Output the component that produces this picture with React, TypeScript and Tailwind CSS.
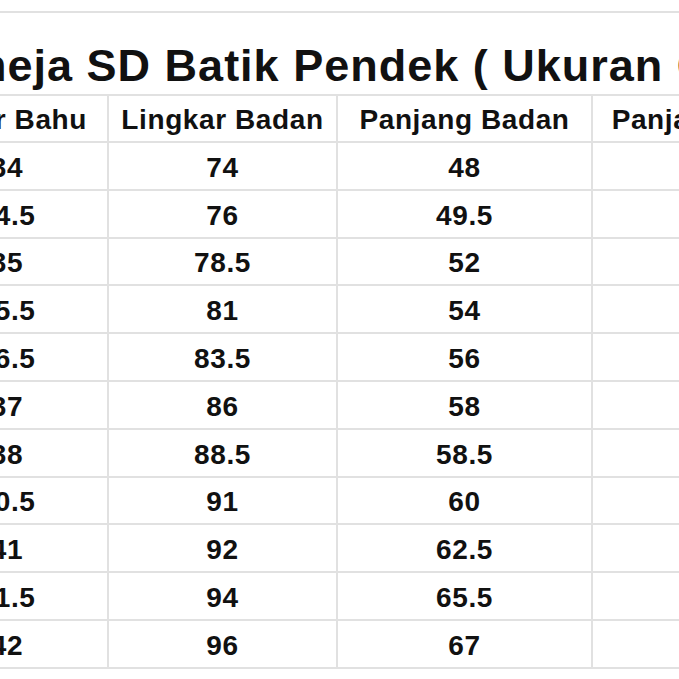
const header = ['Lebar Bahu', 'Lingkar Badan', 'Panjang Badan', 'Panjang Lengan'];

const rows = [
  ['34', '74', '48', ''],
  ['34.5', '76', '49.5', ''],
  ['35', '78.5', '52', ''],
  ['35.5', '81', '54', ''],
  ['36.5', '83.5', '56', ''],
  ['37', '86', '58', ''],
  ['38', '88.5', '58.5', ''],
  ['40.5', '91', '60', ''],
  ['41', '92', '62.5', ''],
  ['41.5', '94', '65.5', ''],
  ['42', '96', '67', ''],
];

const widths = ['w-[202px]', 'w-[229px]', 'w-[255px]', 'w-[264px]'];

const Cell = ({ text, i, tall }: { text: string; i: number; tall?: boolean }) => (
  <div
    className={`${widths[i]} shrink-0 flex items-end justify-center border-r-2 border-b-2 border-[#e1e1e1] pb-[7px] ${
      tall ? 'h-[47px]' : 'h-[47.8px]'
    }`}
  >
    <span className="text-[28px] leading-[28px] font-bold tracking-[0.6px] text-[#111] whitespace-nowrap">{text}</span>
  </div>
);

export default function App() {
  return (
    <div className="w-[679px] h-[679px] overflow-hidden bg-white" style={{ fontFamily: '"Liberation Sans", Arial, sans-serif' }}>
      <div className="ml-[-93px] w-[1000px] pt-[11px]">
        <div className="h-[85px] border-t-2 border-b-2 border-[#e1e1e1] flex items-end pb-[6px]">
          <h1 className="text-[45px] leading-[45px] font-bold tracking-[1px] text-[#111] whitespace-nowrap">
            Kemeja SD Batik Pendek ( Ukuran Cm )
          </h1>
        </div>
        <div className="flex">
          {header.map((h, i) => (
            <Cell key={h} text={h} i={i} tall />
          ))}
        </div>
        {rows.map((r, ri) => (
          <div key={ri} className="flex">
            {r.map((v, i) => (
              <Cell key={i} text={v} i={i} />
            ))}
          </div>
        ))}
      </div>
    </div>
  );
}
